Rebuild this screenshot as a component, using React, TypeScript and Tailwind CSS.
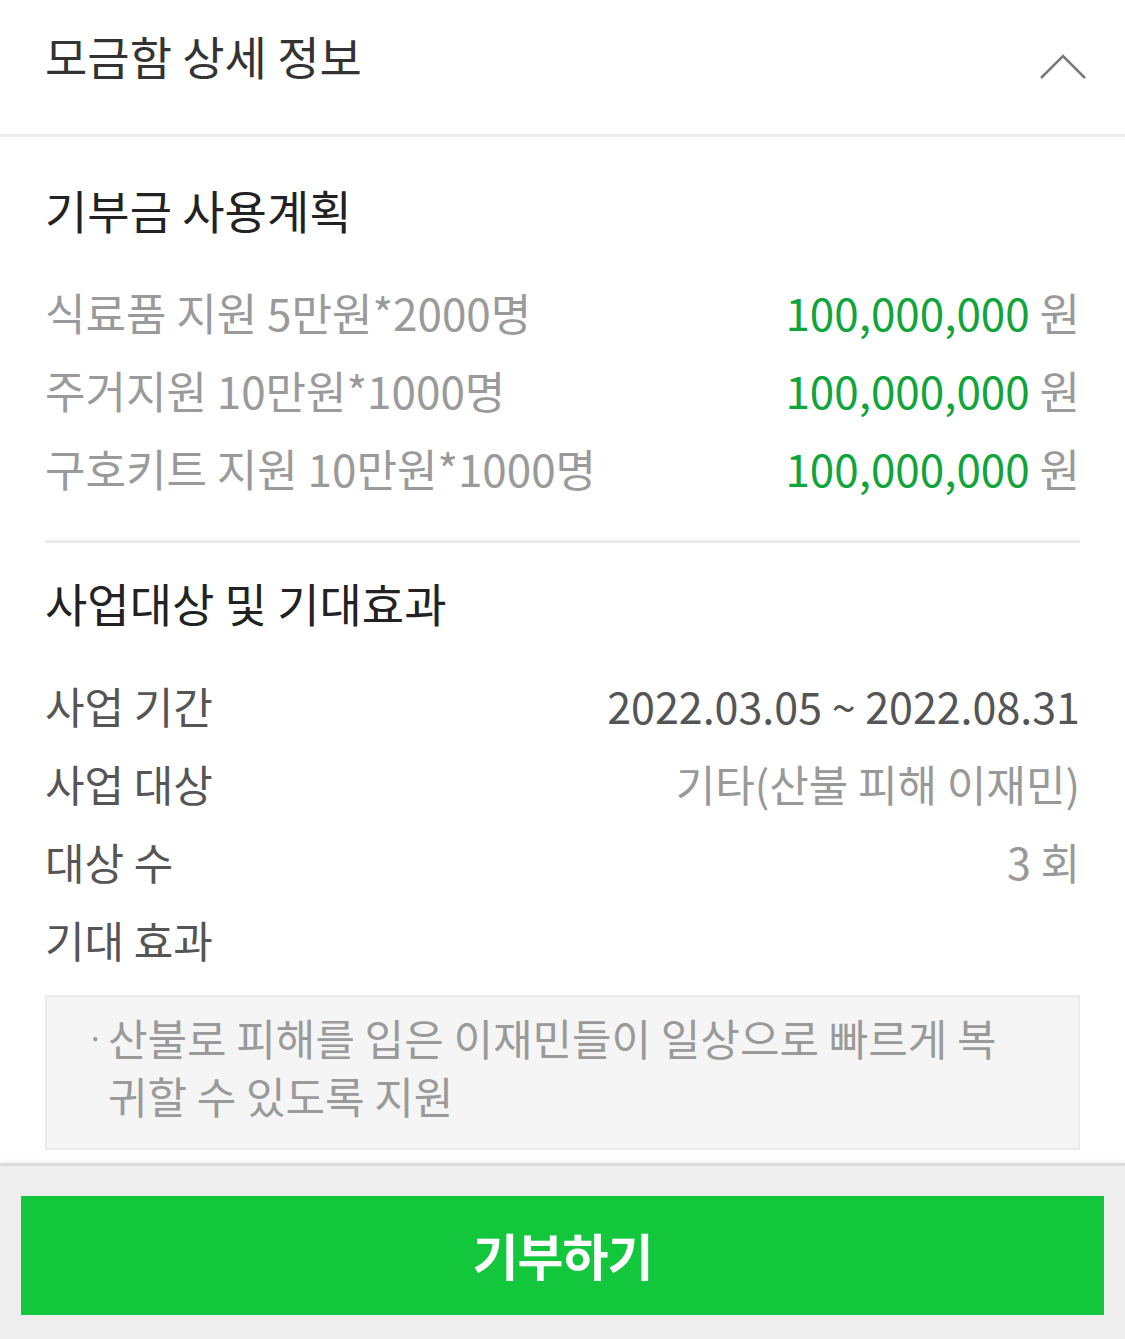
import React from "react";

const font = { fontFamily: '"Noto Sans CJK KR", "Noto Sans", sans-serif' };

function Row({ label, valueNode }: { label: string; valueNode: React.ReactNode }) {
  return (
    <div className="flex h-[78px] items-start justify-between text-[43px] leading-[72px]">
      <span className="text-[#555]">{label}</span>
      {valueNode}
    </div>
  );
}

export default function App() {
  return (
    <div className="w-[1125px] h-[1339px] bg-white overflow-hidden" style={font}>
      <div className="flex h-[137px] items-center justify-between border-b-[3px] border-[#ebebeb] pl-[45px] pr-[38px] pb-[18px]">
        <h1 className="text-[46px] text-[#333] font-normal leading-none mb-[7px]">모금함 상세 정보</h1>
        <svg width="48" height="28" viewBox="0 0 48 28" className="mt-[18px]">
          <path d="M2 25 L24 3 L46 25" fill="none" stroke="#7a7a7a" strokeWidth="2.5" />
        </svg>
      </div>

      <div className="px-[45px]">
        <h2 className="mt-[45px] h-[60px] leading-[54px] text-[46px] text-[#222] font-normal">기부금 사용계획</h2>
        <div className="mt-[35px]">
          {["식료품 지원 5만원*2000명", "주거지원 10만원*1000명", "구호키트 지원 10만원*1000명"].map((l) => (
            <div key={l} className="flex h-[78px] items-start justify-between text-[44px] leading-[70px]">
              <span className="text-[#9a9a9a]">{l}</span>
              <span>
                <span className="text-[#10a53a]">100,000,000</span>
                <span className="text-[#9a9a9a]"> 원</span>
              </span>
            </div>
          ))}
        </div>
        <div className="mt-[29px] h-[3px] bg-[#ebebeb]" />

        <h2 className="mt-[32px] h-[60px] leading-[54px] text-[46px] text-[#222] font-normal">사업대상 및 기대효과</h2>
        <div className="mt-[34px]">
          <Row label="사업 기간" valueNode={<span className="text-[#555]">2022.03.05 ~ 2022.08.31</span>} />
          <Row label="사업 대상" valueNode={<span className="text-[#999]">기타(산불 피해 이재민)</span>} />
          <Row label="대상 수" valueNode={<span className="text-[#999]">3 회</span>} />
          <Row label="기대 효과" valueNode={<span />} />
        </div>
        <div className="mt-[14px] h-[155px] border-2 border-[#ebebeb] bg-[#f5f5f5] pl-[40px] pt-[11px] text-[43px] leading-[58px] text-[#9a9a9a]">
          <div className="flex">
            <span className="w-[21px] shrink-0 text-[30px]">·</span>
            <span className="whitespace-nowrap">
              산불로 피해를 입은 이재민들이 일상으로 빠르게 복
              <br />
              귀할 수 있도록 지원
            </span>
          </div>
        </div>
      </div>

      <div className="mt-[13px] h-[176px] border-t-[3px] border-[#dcdcdc] bg-[#eeeeee] px-[21px] pt-[30px] shadow-[0_-2px_4px_rgba(0,0,0,0.06)]">
        <button className="flex h-[119px] w-full items-center justify-center bg-[#13c73c] pb-[3px] text-[50px] font-bold tracking-[-1px] text-white">
          기부하기
        </button>
      </div>
    </div>
  );
}
